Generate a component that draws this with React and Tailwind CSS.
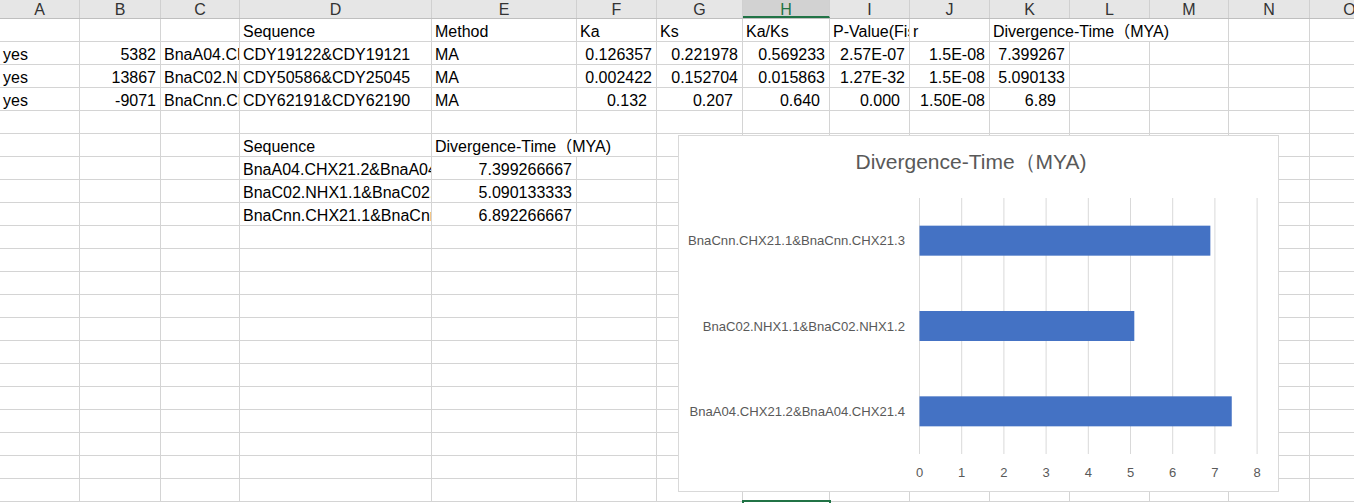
import React from "react";

const COLS = ["A", "B", "C", "D", "E", "F", "G", "H", "I", "J", "K", "L", "M", "N", "O"];
const SPAN = { 1: "", 2: "col-span-2", 3: "col-span-3" };
const GRID =
  "grid grid-cols-[80px_81px_79px_192px_145px_80px_86px_87px_80px_80px_80px_80px_79px_81px_80px]";

const R = (c, t, pr = "pr-[4px]") => ({ c, t, right: true, pr });
const L = (c, t, span = 1) => ({ c, t, span });

const rows = [
  [L(3, "Sequence"), L(4, "Method"), L(5, "Ka"), L(6, "Ks"), L(7, "Ka/Ks"), L(8, "P-Value(Fisher)"), L(9, "r"), L(10, "Divergence-Time（MYA)", 3)],
  [L(0, "yes"), R(1, "5382"), L(2, "BnaA04.CHX21.2&BnaA04.CHX21.4"), L(3, "CDY19122&CDY19121"), L(4, "MA"), R(5, "0.126357"), R(6, "0.221978"), R(7, "0.569233"), R(8, "2.57E-07"), R(9, "1.5E-08"), R(10, "7.399267")],
  [L(0, "yes"), R(1, "13867"), L(2, "BnaC02.NHX1.1&BnaC02.NHX1.2"), L(3, "CDY50586&CDY25045"), L(4, "MA"), R(5, "0.002422"), R(6, "0.152704"), R(7, "0.015863"), R(8, "1.27E-32"), R(9, "1.5E-08"), R(10, "5.090133")],
  [L(0, "yes"), R(1, "-9071"), L(2, "BnaCnn.CHX21.1&BnaCnn.CHX21.3"), L(3, "CDY62191&CDY62190"), L(4, "MA"), R(5, "0.132", "pr-[9px]"), R(6, "0.207", "pr-[9px]"), R(7, "0.640", "pr-[9px]"), R(8, "0.000", "pr-[9px]"), R(9, "1.50E-08"), R(10, "6.89", "pr-[13px]")],
  [],
  [L(3, "Sequence"), L(4, "Divergence-Time（MYA)", 2)],
  [L(3, "BnaA04.CHX21.2&BnaA04.CHX21.4"), R(4, "7.399266667")],
  [L(3, "BnaC02.NHX1.1&BnaC02.NHX1.2"), R(4, "5.090133333")],
  [L(3, "BnaCnn.CHX21.1&BnaCnn.CHX21.3"), R(4, "6.892266667")],
  ...Array.from({ length: 12 }, () => []),
];

function Row({ cells }) {
  const out = [];
  for (let i = 0; i < COLS.length; i++) {
    const cell = cells.find((x) => x.c === i);
    if (cell) {
      const span = cell.span || 1;
      out.push(
        <div
          key={i}
          className={`${SPAN[span]} h-[23px] border-r border-b border-[#d4d4d4] overflow-hidden whitespace-nowrap leading-[26px] ${
            cell.right ? `text-right ${cell.pr}` : "pl-[3px]"
          }`}
        >
          {cell.t}
        </div>
      );
      i += span - 1;
    } else {
      out.push(<div key={i} className="h-[23px] border-r border-b border-[#d4d4d4]" />);
    }
  }
  return <div className={GRID}>{out}</div>;
}

const cats = [
  { name: "BnaCnn.CHX21.1&BnaCnn.CHX21.3", v: 6.892266667 },
  { name: "BnaC02.NHX1.1&BnaC02.NHX1.2", v: 5.090133333 },
  { name: "BnaA04.CHX21.2&BnaA04.CHX21.4", v: 7.399266667 },
];

function Chart() {
  const x0 = 240.5;
  const step = 42.2;
  const top = 62;
  const bottom = 318;
  const band = (bottom - top) / 3;
  return (
    <div className="absolute left-[678px] top-[135px] w-[601px] h-[357px] bg-white border border-[#d9d9d9]">
      <svg width="599" height="355" className="block font-['Liberation_Sans',sans-serif]">
        <text x="292" y="33" textAnchor="middle" fontSize="21" fill="#595959">
          Divergence-Time（MYA)
        </text>
        {Array.from({ length: 9 }, (_, k) => (
          <g key={k}>
            <line x1={x0 + k * step} x2={x0 + k * step} y1={top} y2={bottom} stroke="#d9d9d9" strokeWidth="1" />
            <text x={x0 + k * step} y="341" textAnchor="middle" fontSize="13" fill="#595959">
              {k}
            </text>
          </g>
        ))}
        {cats.map((c, i) => {
          const cy = top + band * i + band / 2;
          return (
            <g key={c.name}>
              <rect x={x0} y={cy - 15} width={c.v * step} height="30" fill="#4472c4" />
              <text x="226" y={cy + 4.5} textAnchor="end" fontSize="13.1" fill="#595959">
                {c.name}
              </text>
            </g>
          );
        })}
      </svg>
    </div>
  );
}

export default function App() {
  return (
    <div className="relative w-[1354px] h-[503px] overflow-hidden bg-white font-['Liberation_Sans','Noto_Sans_CJK_SC',sans-serif] text-[16px] text-black">
      <div className="w-[1390px]">
        <div className={`${GRID} h-[19px] bg-[#e6e6e6] border-b border-[#bfbfbf]`}>
          {COLS.map((c) => (
            <div
              key={c}
              className={`h-[18px] leading-[19px] text-center border-r border-[#d0d0d0] ${
                c === "H" ? "bg-[#d2d2d2] text-[#217346] border-b-2 border-b-[#217346]" : "text-[#333]"
              }`}
            >
              {c}
            </div>
          ))}
        </div>
        {rows.map((cells, i) => (
          <Row key={i} cells={cells} />
        ))}
      </div>
      <Chart />
      <div className="absolute left-[742px] top-[500px] w-[89px] h-[10px] border-2 border-[#217346]" />
    </div>
  );
}
